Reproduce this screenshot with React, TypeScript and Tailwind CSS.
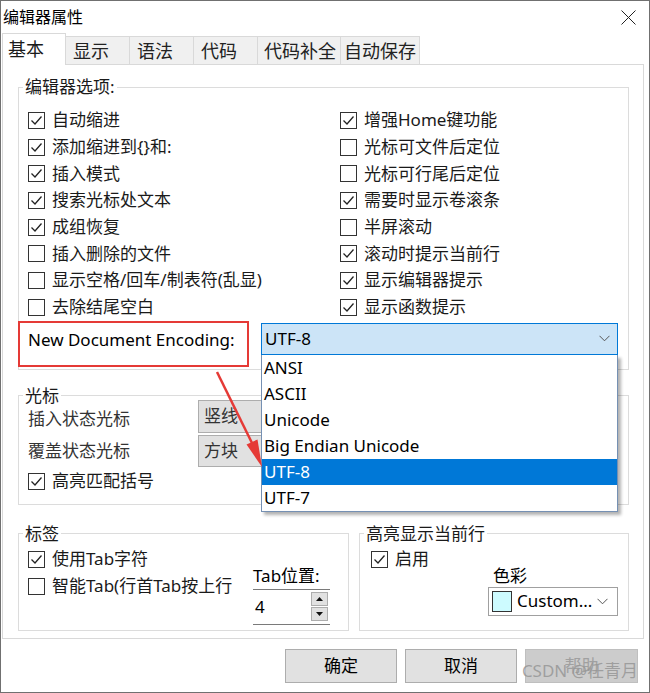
import React from "react";

type Opt = { label: string; checked: boolean };

const leftOpts: Opt[] = [
  { label: "自动缩进", checked: true },
  { label: "添加缩进到{}和:", checked: true },
  { label: "插入模式", checked: true },
  { label: "搜索光标处文本", checked: true },
  { label: "成组恢复", checked: true },
  { label: "插入删除的文件", checked: false },
  { label: "显示空格/回车/制表符(乱显)", checked: false },
  { label: "去除结尾空白", checked: false },
];

const rightOpts: Opt[] = [
  { label: "增强Home键功能", checked: true },
  { label: "光标可文件后定位", checked: false },
  { label: "光标可行尾后定位", checked: false },
  { label: "需要时显示卷滚条", checked: true },
  { label: "半屏滚动", checked: false },
  { label: "滚动时提示当前行", checked: true },
  { label: "显示编辑器提示", checked: true },
  { label: "显示函数提示", checked: true },
];

const tabs = [
  { label: "显示", w: "w-[64px] pl-[7px]" },
  { label: "语法", w: "w-[64px] pl-[7px]" },
  { label: "代码", w: "w-[64px] pl-[7px]" },
  { label: "代码补全", w: "w-[83px] pl-[6px]" },
  { label: "自动保存", w: "w-[79px] pl-[3px]" },
];

const encodings = ["ANSI", "ASCII", "Unicode", "Big Endian Unicode", "UTF-8", "UTF-7"];

function CheckBox({ checked, label }: Opt) {
  return (
    <div className="flex h-full items-center gap-[7px]">
      <span className="flex h-[17px] w-[17px] shrink-0 items-center justify-center border border-[#333] bg-white">
        {checked ? (
          <svg width="15" height="15" viewBox="0 0 15 15">
            <path d="M2.5 7.5 L6 11 L12.5 3.5" fill="none" stroke="#222" strokeWidth="1.3" />
          </svg>
        ) : null}
      </span>
      <span className="whitespace-nowrap text-[17px] leading-[22px] text-[#1a1a1a]">{label}</span>
    </div>
  );
}

function Chevron() {
  return (
    <svg width="11" height="7" viewBox="0 0 11 7">
      <path d="M0.5 0.8 L5.5 5.8 L10.5 0.8" fill="none" stroke="#555" strokeWidth="1" />
    </svg>
  );
}

export default function App() {
  return (
    <div className="relative h-[693px] w-[650px] overflow-hidden border border-[#707070] bg-white font-['Noto_Sans','Noto_Sans_CJK_SC',sans-serif] text-[#1a1a1a]">
      {/* title bar */}
      <div className="flex h-[32px] items-center justify-between pl-[2px] pr-[13px]">
        <span className="text-[16px] leading-[22px] text-black">编辑器属性</span>
        <svg width="15" height="15" viewBox="0 0 15 15">
          <path d="M0.5 0.5 L14.5 14.5 M14.5 0.5 L0.5 14.5" stroke="#222" strokeWidth="1" />
        </svg>
      </div>

      {/* tabs */}
      <div className="flex h-[31px] items-end pl-[1px]">
        <div className="relative z-10 -mb-[1px] flex h-[32px] w-[64px] items-start border-l border-r border-t border-[#d9d9d9] bg-white pl-[5px] pt-[3px] text-[18px] leading-[24px]">
          基本
        </div>
        {tabs.map((t) => (
          <div
            key={t.label}
            className={`flex h-[28px] ${t.w} items-center whitespace-nowrap border-r border-t border-[#d9d9d9] bg-[#f0f0f0] text-[18px] leading-[24px] text-[#222]`}
          >
            {t.label}
          </div>
        ))}
      </div>

      {/* tab page */}
      <div className="ml-[1px] h-[575px] w-[642px] border border-[#d9d9d9] pl-[15px] pr-[14px]">
        <fieldset className="mt-[11px] border border-[#dcdcdc] pb-[2px] pl-[9px] pr-[10px] pt-[9px]">
          <legend className="-ml-[5px] px-[2px] text-[17px] leading-[22px]">编辑器选项:</legend>
          <div className="grid grid-cols-[312px_1fr] auto-rows-[26.7px]">
            {leftOpts.map((o, i) => (
              <React.Fragment key={o.label}>
                <CheckBox {...o} />
                <CheckBox {...rightOpts[i]} />
              </React.Fragment>
            ))}
          </div>
          <div className="flex items-start">
            <div className="-ml-[10px] h-[46px] w-[231px] border-2 border-[#e53a36] pl-[8px] pt-[6px] text-[17px] leading-[22px] text-black">
              New Document Encoding:
            </div>
            <div className="relative z-20 ml-[12px] mt-[2px] w-[357px]">
              <div className="flex h-[32px] items-center border border-[#0078d7] bg-[#cce4f7] pl-[3px] pr-[7px] text-[17px] text-black">
                UTF-8
                <span className="ml-auto">
                  <Chevron />
                </span>
              </div>
              <div className="absolute left-0 top-full w-full border border-t-0 border-[#7590b3] bg-white shadow-[3px_3px_3px_rgba(0,0,0,0.3)]">
                {encodings.map((e) => (
                  <div
                    key={e}
                    className={
                      e === "UTF-8"
                        ? "flex h-[26px] items-center bg-[#0078d7] pl-[2px] text-[17px] text-white"
                        : "flex h-[26px] items-center pl-[2px] text-[17px] text-black"
                    }
                  >
                    {e}
                  </div>
                ))}
              </div>
            </div>
          </div>
        </fieldset>

        <fieldset className="mt-[15px] border border-[#dcdcdc] pb-[9px] pl-[9px] pr-[10px]">
          <legend className="-ml-[5px] px-[2px] text-[17px] leading-[22px]">光标</legend>
          <div className="-mt-[7px] flex h-[33px] items-center">
            <span className="mt-[6px] w-[170px] text-[17px] leading-[22px] text-[#333]">插入状态光标</span>
            <div className="flex h-full w-[130px] items-center border border-[#adadad] bg-[#e1e1e1] pl-[5px] text-[17px] text-[#333]">
              竖线
            </div>
          </div>
          <div className="mt-[2px] flex h-[32px] items-center">
            <span className="w-[170px] text-[17px] leading-[22px] text-[#333]">覆盖状态光标</span>
            <div className="flex h-full w-[130px] items-center border border-[#adadad] bg-[#e1e1e1] pl-[5px] text-[17px] text-[#333]">
              方块
            </div>
          </div>
          <div className="mt-[1px] h-[27px]">
            <CheckBox label="高亮匹配括号" checked />
          </div>
        </fieldset>

        <div className="mt-[18px] flex gap-[10px]">
          <fieldset className="w-[331px] border border-[#dcdcdc] pb-[5px] pl-[9px] pt-[1px]">
            <legend className="-ml-[5px] px-[2px] text-[17px] leading-[22px]">标签</legend>
            <div className="flex">
              <div className="w-[225px]">
                <div className="h-[27px]">
                  <CheckBox label="使用Tab字符" checked />
                </div>
                <div className="h-[27px]">
                  <CheckBox label="智能Tab(行首Tab按上行" checked={false} />
                </div>
              </div>
              <div className="pt-[19px]">
                <div className="text-[17px] leading-[22px] text-black">Tab位置:</div>
                <div className="mt-[2px] flex h-[36px] w-[77px] items-center border-b border-t border-[#7a7a7a] pl-[2px] pr-[2px]">
                  <span className="text-[17px] text-black">4</span>
                  <div className="ml-auto flex flex-col gap-[1px]">
                    <div className="flex h-[14px] w-[17px] items-center justify-center border border-[#adadad] bg-[#e1e1e1]">
                      <svg width="7" height="4" viewBox="0 0 7 4">
                        <path d="M3.5 0 L7 4 L0 4 Z" fill="#111" />
                      </svg>
                    </div>
                    <div className="flex h-[14px] w-[17px] items-center justify-center border border-[#adadad] bg-[#e1e1e1]">
                      <svg width="7" height="4" viewBox="0 0 7 4">
                        <path d="M0 0 L7 0 L3.5 4 Z" fill="#111" />
                      </svg>
                    </div>
                  </div>
                </div>
              </div>
            </div>
          </fieldset>

          <fieldset className="flex-1 border border-[#dcdcdc] pb-[5px] pl-[11px] pt-[1px]">
            <legend className="-ml-[7px] px-[2px] text-[17px] leading-[22px]">高亮显示当前行</legend>
            <div className="h-[27px]">
              <CheckBox label="启用" checked />
            </div>
            <div className="-mt-[8px] ml-[117px]">
              <div className="ml-[5px] text-[17px] leading-[22px] text-black">色彩</div>
              <div className="flex h-[29px] w-[130px] items-center border border-[#a0a0a0] bg-white pl-[3px] pr-[9px]">
                <span className="h-[21px] w-[20px] border border-[#333] bg-[#cdfbff]" />
                <span className="ml-[5px] text-[17px] text-black">Custom...</span>
                <span className="ml-auto">
                  <Chevron />
                </span>
              </div>
            </div>
          </fieldset>
        </div>
      </div>

      {/* dialog buttons */}
      <div className="flex justify-end gap-[8px] pr-[11px] pt-[10px]">
        <button type="button" className="h-[34px] w-[112px] border border-[#adadad] bg-[#e1e1e1] text-[17px] text-black">
          确定
        </button>
        <button type="button" className="h-[34px] w-[112px] border border-[#adadad] bg-[#e1e1e1] text-[17px] text-black">
          取消
        </button>
        <button type="button" disabled className="h-[34px] w-[113px] border border-[#bfbfbf] bg-[#cccccc] text-[17px] text-[#a0a0a0]">
          帮助
        </button>
      </div>

      <div className="pointer-events-none absolute bottom-[9px] right-[11px] text-[17px] leading-[24px] text-[rgba(150,150,150,0.85)]">
        CSDN @任青月
      </div>

      {/* annotation arrow */}
      <svg className="pointer-events-none absolute -left-[1px] -top-[1px] z-30" width="650" height="693" viewBox="0 0 650 693">
        <line x1="217" y1="372" x2="252" y2="443" stroke="#e53a36" strokeWidth="2.5" />
        <path d="M262 467 L257.5 439.5 L246.5 444.5 Z" fill="#e53a36" />
      </svg>
    </div>
  );
}
